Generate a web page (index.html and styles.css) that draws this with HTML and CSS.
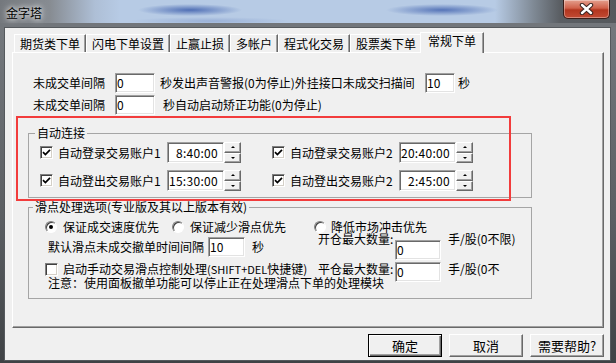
FILE: index.html
```html
<!DOCTYPE html>
<html lang="zh-CN">
<head>
    <meta charset="UTF-8">
    <title>金字塔</title>
    <link rel="stylesheet" href="styles.css">
</head>
<body>
<div class="window">
    <div class="titlebar">
        <span class="title">金字塔</span>
        <button class="close-btn" type="button">
            <svg width="15" height="12" viewBox="0 0 15 12">
                <path d="M3 2 L12 10 M12 2 L3 10" stroke="#3a2420" stroke-width="4.4" stroke-linecap="round"/>
                <path d="M3 2 L12 10 M12 2 L3 10" stroke="#fff" stroke-width="2.4" stroke-linecap="round"/>
            </svg>
        </button>
    </div>

    <div class="client">
        <!-- 选项卡 -->
        <div class="tabs">
            <div class="tab">期货类下单</div>
            <div class="tab">闪电下单设置</div>
            <div class="tab">止赢止损</div>
            <div class="tab">多帐户</div>
            <div class="tab">程式化交易</div>
            <div class="tab">股票类下单</div>
            <div class="tab active">常规下单</div>
        </div>

        <div class="panel">
            <div class="row">
                <span class="lbl">未成交单间隔</span>
                <span class="edit edit-40">0</span>
                <span class="row-text">秒发出声音警报(0为停止)外挂接口未成交扫描间</span>
                <span class="edit edit-30">10</span>
                <span class="unit">秒</span>
            </div>
            <div class="row">
                <span class="lbl">未成交单间隔</span>
                <span class="edit edit-40">0</span>
                <span class="row-text2">秒自动启动矫正功能(0为停止)</span>
            </div>

            <!-- 自动连接 -->
            <fieldset class="group group-auto">
                <legend>自动连接</legend>
                <div class="auto-grid">
                    <div class="auto-item">
                        <span class="check"><svg width="9" height="9" viewBox="0 0 9 9"><path d="M1 4.2 L3.4 6.6 L8 1.8" fill="none" stroke="#000" stroke-width="1.7"/></svg></span>
                        <span class="auto-label">自动登录交易账户1</span>
                        <span class="spin"><span class="spin-field">8:40:00</span><span class="spin-btns"><span class="up"></span><span class="down"></span></span></span>
                    </div>
                    <div class="auto-item">
                        <span class="check"><svg width="9" height="9" viewBox="0 0 9 9"><path d="M1 4.2 L3.4 6.6 L8 1.8" fill="none" stroke="#000" stroke-width="1.7"/></svg></span>
                        <span class="auto-label">自动登录交易账户2</span>
                        <span class="spin"><span class="spin-field">20:40:00</span><span class="spin-btns"><span class="up"></span><span class="down"></span></span></span>
                    </div>
                    <div class="auto-item">
                        <span class="check"><svg width="9" height="9" viewBox="0 0 9 9"><path d="M1 4.2 L3.4 6.6 L8 1.8" fill="none" stroke="#000" stroke-width="1.7"/></svg></span>
                        <span class="auto-label">自动登出交易账户1</span>
                        <span class="spin"><span class="spin-field">15:30:00</span><span class="spin-btns"><span class="up"></span><span class="down"></span></span></span>
                    </div>
                    <div class="auto-item">
                        <span class="check"><svg width="9" height="9" viewBox="0 0 9 9"><path d="M1 4.2 L3.4 6.6 L8 1.8" fill="none" stroke="#000" stroke-width="1.7"/></svg></span>
                        <span class="auto-label">自动登出交易账户2</span>
                        <span class="spin"><span class="spin-field">2:45:00</span><span class="spin-btns"><span class="up"></span><span class="down"></span></span></span>
                    </div>
                </div>
            </fieldset>

            <!-- 滑点处理 -->
            <fieldset class="group group-slip">
                <legend>滑点处理选项(专业版及其以上版本有效)</legend>
                <div class="slip-grid">
                    <div class="slip-left">
                        <div class="radio-row">
                            <span class="radio checked"></span>
                            <span class="radio-label">保证成交速度优先</span>
                            <span class="radio radio-2"></span>
                            <span class="radio-label">保证减少滑点优先</span>
                        </div>
                        <div class="cancel-row">
                            <span>默认滑点未成交撤单时间间隔</span>
                            <span class="edit edit-37">10</span>
                            <span class="unit-sec">秒</span>
                        </div>
                        <div class="check-row">
                            <span class="check"></span>
                            <span class="check-label">启动手动交易滑点控制处理<span class="small">(SHIFT+DEL</span>快捷键)</span>
                        </div>
                        <div class="note">注意：使用面板撤单功能可以停止正在处理滑点下单的处理模块</div>
                    </div>
                    <div class="slip-right">
                        <div class="radio-row">
                            <span class="radio"></span>
                            <span class="radio-label">降低市场冲击优先</span>
                        </div>
                        <div class="qty-row qty-open">
                            <span class="qty-label">开仓最大数量:</span>
                            <span class="edit edit-46">0</span>
                            <span class="qty-unit">手/股(0不限)</span>
                        </div>
                        <div class="qty-row qty-close">
                            <span class="qty-label">平仓最大数量:</span>
                            <span class="edit edit-46">0</span>
                            <span class="qty-unit">手/股(0不</span>
                        </div>
                    </div>
                </div>
            </fieldset>

            <div class="highlight"></div>
        </div>

        <div class="buttons">
            <button class="btn btn-default" type="button">确定</button>
            <button class="btn" type="button">取消</button>
            <button class="btn" type="button">需要帮助?</button>
        </div>
    </div>
</div>
</body>
</html>
```

FILE: styles.css
```css
body {
    margin: 0;
    font-family: "Noto Sans CJK SC", "Noto Sans", sans-serif;
    font-size: 12px;
    line-height: 14px;
    color: #000;
}
.window {
    width: 616px;
    height: 363px;
    display: flex;
    flex-direction: column;
    overflow: hidden;
    background: linear-gradient(180deg, #777b80, #5b5f63 60%, #3f4245);
}

/* 标题栏 */
.titlebar {
    flex: none;
    height: 27px;
    display: flex;
    justify-content: space-between;
    align-items: flex-start;
    background:
        linear-gradient(180deg, rgba(0,0,0,0) 23px, #72767b 23px),
        radial-gradient(52px 6px at 190px 10px, rgba(45,80,165,.75), rgba(45,80,165,0)),
        radial-gradient(56px 6px at 442px 10px, rgba(45,80,165,.7), rgba(45,80,165,0)),
        radial-gradient(80px 4px at 210px 21px, rgba(70,100,175,.25), rgba(70,100,175,0)),
        linear-gradient(90deg, #74787d 0, #878c92 50px, #aebfd6 95px, #b7cbe5 120px, #b7cbe5 495px, #7d8792 535px, #5a5e63 560px, #55595d 100%);
}
.title {
    margin: 6px 0 0 6px;
    text-shadow: 0 0 5px #fff, 0 0 9px rgba(255,255,255,.8);
}
.close-btn {
    width: 47px;
    height: 19px;
    margin-right: 6px;
    padding: 0;
    border: 1px solid #3b1d18;
    border-top: none;
    border-radius: 0 0 5px 5px;
    background: linear-gradient(180deg, #e4a08e, #d0614a 45%, #b3361f 55%, #c24a33);
    box-shadow: inset 0 0 0 1px rgba(255,255,255,.35);
    display: flex;
    align-items: center;
    justify-content: center;
}

/* 客户区 */
.client {
    flex: 1;
    margin: 0 5px 2px 4px;
    border: 1px solid #55595d;
    background: #f0f0f0;
    display: flex;
    flex-direction: column;
}
.tabs {
    display: flex;
    align-items: flex-end;
    height: 20px;
    margin: 4px 0 0 9px;
}
.tab {
    box-sizing: border-box;
    height: 18px;
    padding: 2px 5px 0;
    border: 1px solid;
    border-color: #fff #696969 transparent #fff;
    border-bottom: none;
    box-shadow: inset -1px 0 #a0a0a0;
    white-space: nowrap;
}
.tab.active {
    height: 21px;
    margin: 0 -2px -1px -2px;
    padding: 1px 7px 0;
    background: #f0f0f0;
    position: relative;
    z-index: 1;
}
.panel {
    position: relative;
    box-sizing: border-box;
    width: 592px;
    height: 276px;
    margin-left: 7px;
    padding: 20px 0 0 15px;
    border: 1px solid;
    border-color: #fff #696969 #696969 #fff;
    box-shadow: inset -1px -1px #a0a0a0;
}

/* 输入框 */
.edit {
    box-sizing: border-box;
    height: 20px;
    padding: 2px 0 0 1px;
    background: #fff;
    border: 1px solid;
    border-color: #a0a0a0 #fff #fff #a0a0a0;
    box-shadow: inset 1px 1px #696969, inset -1px -1px #e3e3e3;
}
.edit-40 { width: 40px; }
.edit-30 { width: 30px; }
.edit-37 { width: 37px; }
.edit-46 { width: 46px; }

.row {
    display: flex;
    align-items: center;
    height: 20px;
    margin-left: 5px;
}
.row + .row {
    margin-top: 2px;
}
.lbl {
    width: 72px;
    margin-right: 10px;
}
.row-text {
    width: 265px;
    margin-left: 5px;
    white-space: nowrap;
}
.row-text2 {
    margin-left: 8px;
}
.unit {
    margin-left: 3px;
}

/* 分组框 */
.group {
    box-sizing: border-box;
    width: 504px;
    min-width: 0;
    margin: 0;
    border: 1px solid #a5a5a5;
}
.group legend {
    padding: 0 2px;
    line-height: 14px;
}
.group-auto {
    margin-top: 11px;
    padding: 2px 0 6px;
}
.group-auto legend {
    margin-left: 6px;
}
.group-slip {
    margin-top: 2px;
    padding: 6px 0 8px;
}
.group-slip legend {
    margin-left: 4px;
}

.check {
    flex: none;
    box-sizing: border-box;
    width: 13px;
    height: 13px;
    background: #fff;
    border: 1px solid;
    border-color: #808080 #fff #fff #808080;
    box-shadow: inset 1px 1px #404040, inset -1px -1px #d4d0c8;
    display: flex;
    align-items: center;
    justify-content: center;
}
.auto-grid {
    display: grid;
    grid-template-columns: 201px 201px;
    column-gap: 31px;
    row-gap: 7px;
    margin-left: 11px;
}
.auto-item {
    display: flex;
    align-items: center;
    height: 21px;
}
.auto-label {
    width: 104px;
    margin: 0 5px;
    white-space: nowrap;
}
.spin {
    display: flex;
}
.spin-field {
    box-sizing: border-box;
    width: 57px;
    height: 21px;
    padding: 3px 5px 0 0;
    text-align: right;
    letter-spacing: 0.3px;
    background: #fff;
    border: 1px solid;
    border-color: #a0a0a0 #fff #fff #a0a0a0;
    box-shadow: inset 1px 1px #696969, inset -1px -1px #e3e3e3;
}
.spin-btns {
    width: 17px;
    height: 21px;
    display: flex;
    flex-direction: column;
}
.spin-btns span {
    flex: 1;
    box-sizing: border-box;
    border: 1px solid;
    border-color: #fff #696969 #696969 #fff;
    box-shadow: inset -1px -1px #a0a0a0;
    background: #f0f0f0;
    display: flex;
    align-items: center;
    justify-content: center;
}
.spin-btns .up::after {
    content: "";
    border: 2px solid transparent;
    border-top: none;
    border-bottom: 2px solid #000;
}
.spin-btns .down::after {
    content: "";
    border: 2px solid transparent;
    border-bottom: none;
    border-top: 2px solid #000;
}

/* 滑点 */
.slip-grid {
    display: grid;
    grid-template-columns: 269px auto;
    margin-left: 16px;
}
.radio-row {
    display: flex;
    align-items: center;
    height: 14px;
}
.radio {
    flex: none;
    position: relative;
    box-sizing: border-box;
    width: 12px;
    height: 12px;
    border-radius: 50%;
    background: #fff;
    border: 1px solid;
    border-color: #808080 #fff #fff #808080;
    box-shadow: inset 1px 1px #404040;
}
.radio.checked::after {
    content: "";
    position: absolute;
    left: 3px;
    top: 3px;
    width: 4px;
    height: 4px;
    border-radius: 50%;
    background: #000;
}
.radio-label {
    margin-left: 6px;
    white-space: nowrap;
}
.radio-2 {
    margin-left: 13px;
}
.slip-right .radio-label {
    margin-left: 5px;
}
.cancel-row {
    display: flex;
    align-items: center;
    height: 20px;
    margin: 3px 0 0 3px;
}
.cancel-row .edit {
    margin-left: 4px;
}
.unit-sec {
    margin-left: 7px;
}
.check-row {
    display: flex;
    align-items: center;
    height: 14px;
    margin-top: 5px;
}
.check-label {
    margin-left: 5px;
    white-space: nowrap;
}
.small {
    font-size: 11px;
}
.note {
    margin-left: 3px;
    white-space: nowrap;
}
.qty-row {
    display: flex;
    align-items: flex-start;
    margin-left: 4px;
}
.qty-label {
    width: 77px;
    white-space: nowrap;
}
.qty-unit {
    margin-left: 7px;
    white-space: nowrap;
}
.qty-open {
    margin-top: -2px;
}
.qty-open .edit {
    margin-top: 8px;
}
.qty-close {
    margin-top: 2px;
}

/* 红色标注框 */
.highlight {
    position: absolute;
    left: 3px;
    top: 63px;
    width: 495px;
    height: 85px;
    box-sizing: border-box;
    border: 2px solid #f23c3c;
    pointer-events: none;
}

/* 底部按钮 */
.buttons {
    display: flex;
    justify-content: flex-end;
    gap: 7px;
    margin-top: 6px;
    padding-right: 6px;
}
.btn {
    box-sizing: border-box;
    width: 74px;
    height: 23px;
    padding: 0;
    font-family: inherit;
    font-size: 13px;
    color: #000;
    background: #f0f0f0;
    border: 1px solid;
    border-color: #fff #696969 #696969 #fff;
    box-shadow: inset -1px -1px #a0a0a0;
}
.btn-default {
    border-color: #000;
    box-shadow: inset 1px 1px #fff, inset -1px -1px #696969, inset -2px -2px #a0a0a0;
}
```
